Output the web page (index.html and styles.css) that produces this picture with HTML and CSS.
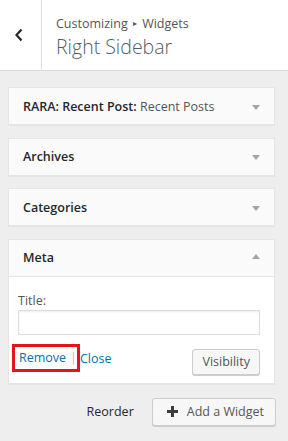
FILE: index.html
```html
<!DOCTYPE html>
<html lang="en">
<head>
  <meta charset="UTF-8">
  <title>Customizing Widgets</title>
  <link rel="stylesheet" href="styles.css">
</head>
<body>
  <!-- HEADER -->
  <div class="panel-head">
    <button class="back-btn" aria-label="Back">
      <svg width="10" height="14" viewBox="0 0 10 14"><path d="M7.5 1.5 L2.5 7 L7.5 12.5" fill="none" stroke="#23282d" stroke-width="2.2"/></svg>
    </button>
    <div class="head-titles">
      <div class="crumb">Customizing <span class="sep">&#9656;</span> Widgets</div>
      <div class="panel-title">Right Sidebar</div>
    </div>
  </div>

  <!-- WIDGETS -->
  <div class="widget-list">
    <div class="widget">
      <div class="widget-top">
        <span class="widget-name"><b>RARA: Recent Post:</b> Recent Posts</span>
        <span class="arrow down"></span>
      </div>
    </div>
    <div class="widget">
      <div class="widget-top">
        <span class="widget-name"><b>Archives</b></span>
        <span class="arrow down"></span>
      </div>
    </div>
    <div class="widget">
      <div class="widget-top">
        <span class="widget-name"><b>Categories</b></span>
        <span class="arrow down"></span>
      </div>
    </div>
    <div class="widget open">
      <div class="widget-top">
        <span class="widget-name"><b>Meta</b></span>
        <span class="arrow up"></span>
      </div>
      <div class="widget-inside">
        <label class="field-label">Title:</label>
        <input class="field" type="text">
        <div class="widget-actions">
          <div class="links">
            <!-- rote Markierung um Remove -->
            <span class="mark"><a href="#">Remove</a><span class="pipe">|</span></span><a href="#" class="close">Close</a>
          </div>
          <button class="btn">Visibility</button>
        </div>
      </div>
    </div>
  </div>

  <!-- FOOTER ACTIONS -->
  <div class="list-actions">
    <a href="#" class="reorder">Reorder</a>
    <button class="btn add-btn">
      <svg width="11" height="11" viewBox="0 0 11 11"><path d="M4 0h3v4h4v3H7v4H4V7H0V4h4z" fill="#3c3c3c"/></svg>
      Add a Widget
    </button>
  </div>
</body>
</html>
```

FILE: styles.css
```css
* {
  margin: 0;
  padding: 0;
  box-sizing: border-box;
}

body {
  font-family: "Open Sans", "Noto Sans", sans-serif;
  font-size: 13px;
  color: #555;
  background: #eee;
  width: 288px;
  height: 441px;
  overflow: hidden;
}

/* HEADER */
.panel-head {
  display: flex;
  height: 71px;
  background: #fff;
  border-bottom: 1px solid #ddd;
}

.back-btn {
  width: 42px;
  border: none;
  border-right: 1px solid #ddd;
  background: #fff;
  display: flex;
  align-items: center;
  justify-content: center;
  padding-right: 3px;
}

.head-titles {
  padding: 15px 0 0 14px;
}

.crumb {
  font-size: 12.5px;
  color: #555;
  line-height: 16px;
}

.crumb .sep {
  font-size: 8px;
  vertical-align: 2px;
  margin: 0 2px;
}

.panel-title {
  font-size: 19.5px;
  font-weight: 300;
  color: #555d66;
  line-height: 26px;
  margin-top: 2px;
}

/* WIDGETS */
.widget-list {
  padding: 16px 13px 0 8px;
  display: flex;
  flex-direction: column;
  gap: 12.5px;
}

.widget {
  background: #fff;
  border: 1px solid #e5e5e5;
  box-shadow: 0 1px 1px rgba(0,0,0,0.04);
}

.widget-top {
  display: flex;
  align-items: center;
  justify-content: space-between;
  height: 36px;
  padding: 0 14px;
  background: #fafafa;
}

.widget.open .widget-top {
  height: 37px;
  border-bottom: 1px solid #e5e5e5;
}

.widget-name {
  font-size: 12.5px;
  color: #555;
  white-space: nowrap;
}

.widget-name b {
  font-weight: 600;
  color: #23282d;
}

.arrow {
  width: 0;
  height: 0;
  border-left: 4px solid transparent;
  border-right: 4px solid transparent;
  margin-top: 2px;
}

.arrow.down {
  border-top: 5px solid #a0a5aa;
}

.arrow.up {
  border-bottom: 5px solid #a0a5aa;
  margin-top: -2px;
}

.widget-inside {
  padding: 16px 14px 8px 9px;
}

.field-label {
  display: block;
  font-size: 12.5px;
  color: #555;
  line-height: 16px;
}

.field {
  display: block;
  width: 100%;
  height: 25px;
  margin-top: 1px;
  border: 1px solid #ddd;
  box-shadow: inset 0 1px 2px rgba(0,0,0,0.07);
}

.widget-actions {
  display: flex;
  justify-content: space-between;
  align-items: flex-start;
  margin-top: 14px;
}

.links {
  display: flex;
  align-items: center;
  font-size: 12.5px;
  line-height: 16px;
  margin-top: -3px;
}

.links a {
  color: #0073aa;
  text-decoration: none;
}

.mark {
  display: flex;
  align-items: center;
  height: 28px;
  border: 3px solid #e8131a;
  padding: 0 0 0 4px;
  margin-left: -6px;
  margin-top: -2px;
}

.pipe {
  color: #bbb;
  margin-left: 4px;
}

.btn {
  font-family: "Open Sans", "Noto Sans", sans-serif;
  font-size: 12.5px;
  color: #555;
  background: #f7f7f7;
  border: 1px solid #ccc;
  border-radius: 3px;
  box-shadow: 0 1px 0 #ccc;
  height: 26px;
  padding: 0 9px;
}

/* FOOTER ACTIONS */
.list-actions {
  display: flex;
  justify-content: flex-end;
  align-items: center;
  gap: 18px;
  padding: 14px 12px 0 0;
}

.reorder {
  color: #23282d;
  text-decoration: none;
  font-size: 12.5px;
}

.add-btn {
  display: flex;
  align-items: center;
  gap: 9px;
  height: 28px;
  padding: 0 11px 0 14px;
}
```
